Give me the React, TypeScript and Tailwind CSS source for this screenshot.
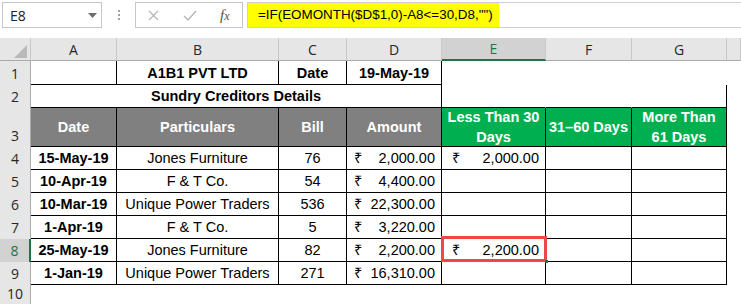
import React from "react";

type Row = { n: number; date: string; part: string; bill: string; amt: string; e?: string };

const rows: Row[] = [
  { n: 4, date: "15-May-19", part: "Jones Furniture", bill: "76", amt: "2,000.00", e: "2,000.00" },
  { n: 5, date: "10-Apr-19", part: "F & T Co.", bill: "54", amt: "4,400.00" },
  { n: 6, date: "10-Mar-19", part: "Unique Power Traders", bill: "536", amt: "22,300.00" },
  { n: 7, date: "1-Apr-19", part: "F & T Co.", bill: "5", amt: "3,220.00" },
  { n: 8, date: "25-May-19", part: "Jones Furniture", bill: "82", amt: "2,200.00", e: "2,200.00" },
  { n: 9, date: "1-Jan-19", part: "Unique Power Traders", bill: "271", amt: "16,310.00" },
];

const rh =
  "flex items-end justify-center pb-[2px] bg-[#e6e6e6] border-r border-[#ababab] text-[14px] leading-[18px] text-[#262626] font-['Open_Sans',sans-serif]";
const rhSel =
  "flex items-end justify-center pb-[2px] bg-[#d2d2d2] border-r-2 border-[#217346] text-[14px] leading-[18px] text-[#217346] font-['Open_Sans',sans-serif]";
const ch =
  "flex items-center justify-center bg-[#e6e6e6] border-r border-b border-r-[#c8c8c8] border-b-[#ababab] text-[14px] text-[#262626] font-['Open_Sans',sans-serif]";
const chSel =
  "flex items-center justify-center bg-[#d2d2d2] border-r border-b-2 border-r-[#c8c8c8] border-b-[#217346] text-[14px] text-[#217346] font-['Open_Sans',sans-serif]";

const cellB = "flex items-end justify-center pb-[2px] border-r border-b border-black";
const empty = "border-r border-b border-transparent";

function Money({ v, pl }: { v: string; pl: string }) {
  return (
    <div className={`flex items-end justify-between pb-[2px] pr-[6px] border-r border-b border-black ${pl}`}>
      <span>₹</span>
      <span>{v}</span>
    </div>
  );
}

export default function App() {
  return (
    <div className="w-[741px] h-[304px] overflow-hidden bg-white text-black font-['Liberation_Sans',Arial,sans-serif]">
      {/* Formula bar */}
      <div className="h-[38px] flex items-start pt-[2px]">
        <div className="ml-[2px] w-[100px] h-[26px] border border-[#c6c6c6] flex items-center justify-between pl-[7px] pr-[4px] text-[14px] text-[#222] font-['Open_Sans',sans-serif]">
          <span>E8</span>
          <svg width="9" height="5" viewBox="0 0 9 5">
            <path d="M0 0 L9 0 L4.5 5 Z" fill="#6e6e6e" />
          </svg>
        </div>
        <div className="w-[33px] h-[26px] flex flex-col items-center justify-center gap-[2px]">
          <div className="w-[2px] h-[2px] bg-[#a0a0a0]" />
          <div className="w-[2px] h-[2px] bg-[#a0a0a0]" />
          <div className="w-[2px] h-[2px] bg-[#a0a0a0]" />
        </div>
        <div className="w-[108px] h-[26px] border border-[#c6c6c6] flex items-center">
          <svg className="ml-[12px]" width="11" height="11" viewBox="0 0 11 11">
            <path d="M1 1 L10 10 M10 1 L1 10" stroke="#b4b4b4" strokeWidth="1.1" />
          </svg>
          <svg className="ml-[24px]" width="14" height="11" viewBox="0 0 14 11">
            <path d="M1 6 L5 10 L13 1" stroke="#b4b4b4" strokeWidth="1.3" fill="none" />
          </svg>
          <span className="ml-[23px] text-[15px] italic text-[#555] font-['Liberation_Serif',serif]">
            f<span className="text-[12px]">x</span>
          </span>
        </div>
        <div className="ml-[4px] flex-1 h-[26px] border-y border-l border-[#d0d0d0] flex">
          <div className="w-[251px] h-full bg-[#ffff00] flex items-center pl-[10px] text-[13.4px] whitespace-nowrap">
            =IF(EOMONTH($D$1,0)-A8&lt;=30,D8,"")
          </div>
        </div>
      </div>

      {/* Sheet grid */}
      <div className="grid grid-cols-[31px_86px_162px_68px_95px_104px_86px_95px_14px] grid-rows-[23px_24px_23px_39px_23px_23px_23px_23px_23px_23px_20px] text-[14.5px] leading-[17px]">
        {/* column headers */}
        <div className="bg-[#e6e6e6] border-r border-b border-r-[#c8c8c8] border-b-[#ababab] flex items-end justify-end pr-[3px] pb-[2px]">
          <svg width="13" height="13" viewBox="0 0 13 13">
            <path d="M13 0 L13 13 L0 13 Z" fill="#b9b9b9" />
          </svg>
        </div>
        <div className={ch}>A</div>
        <div className={ch}>B</div>
        <div className={ch}>C</div>
        <div className={ch}>D</div>
        <div className={chSel}>E</div>
        <div className={ch}>F</div>
        <div className={ch}>G</div>
        <div className={ch}></div>

        {/* row 1 */}
        <div className={rh}>1</div>
        <div className={cellB}></div>
        <div className={`${cellB} font-bold`}>A1B1 PVT LTD</div>
        <div className={`${cellB} font-bold`}>Date</div>
        <div className={`${cellB} font-bold`}>19-May-19</div>
        <div className={empty}></div>
        <div className={empty}></div>
        <div className={empty}></div>
        <div className={empty}></div>

        {/* row 2 */}
        <div className={rh}>2</div>
        <div className={`${cellB} col-span-4 font-bold`}>Sundry Creditors Details</div>
        <div className="border-r border-b border-r-transparent border-b-black"></div>
        <div className="border-r border-b border-r-transparent border-b-black"></div>
        <div className="border-r border-b border-r-black border-b-black"></div>
        <div className={empty}></div>

        {/* row 3 */}
        <div className={rh}>3</div>
        <div className="flex items-center justify-center bg-[#808080] text-white font-bold border-r border-b border-black">Date</div>
        <div className="flex items-center justify-center bg-[#808080] text-white font-bold border-r border-b border-black">Particulars</div>
        <div className="flex items-center justify-center bg-[#808080] text-white font-bold border-r border-b border-black">Bill</div>
        <div className="flex items-center justify-center bg-[#808080] text-white font-bold border-r border-b border-black">Amount</div>
        <div className="flex items-center justify-center text-center bg-[#00b050] text-white font-bold leading-[20px] border-r border-b border-black">
          Less Than 30
          <br />
          Days
        </div>
        <div className="flex items-center justify-center bg-[#00b050] text-white font-bold border-r border-b border-black">31–60 Days</div>
        <div className="flex items-center justify-center text-center bg-[#00b050] text-white font-bold leading-[20px] border-r border-b border-black">
          More Than
          <br />
          61 Days
        </div>
        <div className={empty}></div>

        {/* data rows */}
        {rows.map((r) => (
          <React.Fragment key={r.n}>
            <div className={r.n === 8 ? rhSel : rh}>{r.n}</div>
            <div className={`${cellB} font-bold`}>{r.date}</div>
            <div className={cellB}>{r.part}</div>
            <div className={cellB}>{r.bill}</div>
            <Money v={r.amt} pl="pl-[7px]" />
            {r.e ? (
              r.n === 8 ? (
                <div className="relative flex items-end justify-between pb-[2px] pl-[10px] pr-[6px] border-r border-b border-black">
                  <span>₹</span>
                  <span>{r.e}</span>
                  <div className="absolute -left-[1px] -top-[3px] -right-[2px] -bottom-[1px] border-[3px] border-[#f04646]" />
                  <div className="absolute -right-[3px] -bottom-[2px] w-[3px] h-[3px] bg-[#217346]" />
                </div>
              ) : (
                <Money v={r.e} pl="pl-[10px]" />
              )
            ) : (
              <div className="border-r border-b border-black"></div>
            )}
            <div className="border-r border-b border-black"></div>
            <div className="border-r border-b border-black"></div>
            <div className={empty}></div>
          </React.Fragment>
        ))}

        {/* row 10 */}
        <div className={rh}>10</div>
        <div></div>
        <div></div>
        <div></div>
        <div></div>
        <div></div>
        <div></div>
        <div></div>
        <div></div>
      </div>
    </div>
  );
}
